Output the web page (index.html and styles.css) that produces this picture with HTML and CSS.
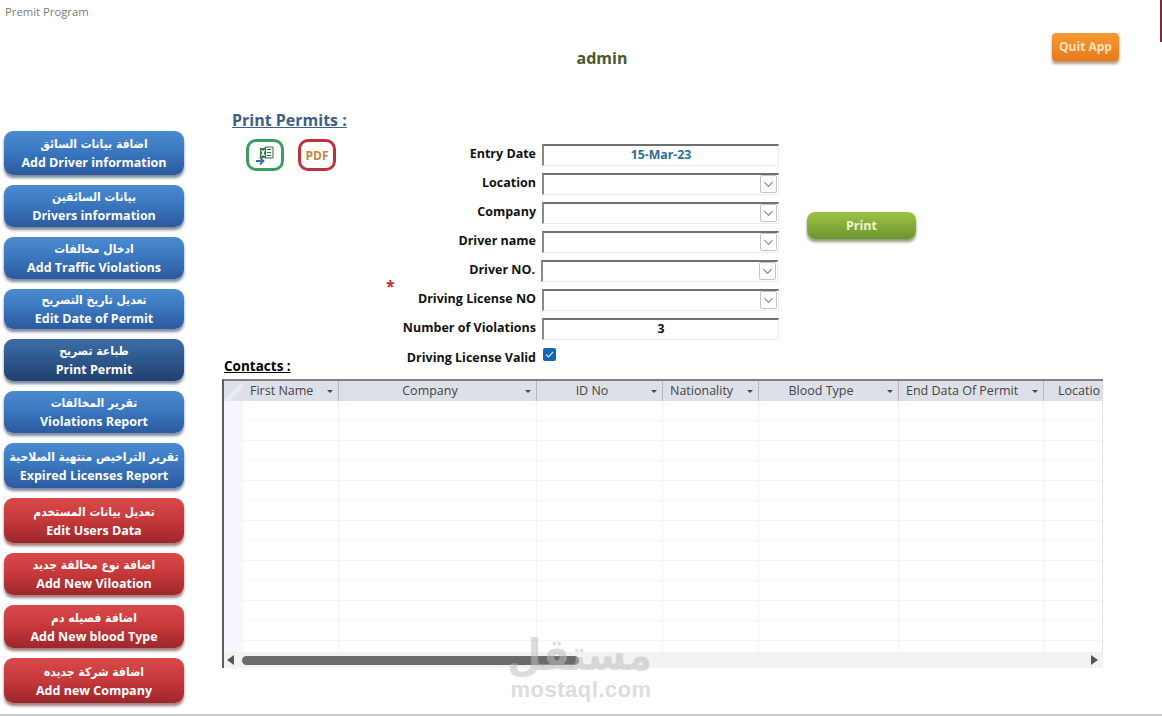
FILE: index.html
```html
<!DOCTYPE html>
<html lang="en">
<head>
    <meta charset="UTF-8">
    <meta name="viewport" content="width=device-width, initial-scale=1.0">
    <title>Premit Program</title>
    <link rel="stylesheet" href="styles.css">
</head>
<body>

<div class="window">
    <div class="titlebar">Premit Program</div>

    <div class="header">
        <div class="user">admin</div>
        <button class="quit">Quit App</button>
    </div>

    <div class="content">
        <div class="sidebar">
            <button class="nav blue"><span lang="ar" dir="rtl">اضافة بيانات السائق</span><b>Add Driver information</b></button>
            <button class="nav blue"><span lang="ar" dir="rtl">بيانات السائقين</span><b>Drivers information</b></button>
            <button class="nav blue"><span lang="ar" dir="rtl">ادخال مخالفات</span><b>Add Traffic Violations</b></button>
            <button class="nav blue"><span lang="ar" dir="rtl">تعديل تاريخ التصريح</span><b>Edit Date of Permit</b></button>
            <button class="nav navy"><span lang="ar" dir="rtl">طباعة تصريح</span><b>Print Permit</b></button>
            <button class="nav blue"><span lang="ar" dir="rtl">تقرير المخالفات</span><b>Violations Report</b></button>
            <button class="nav blue"><span lang="ar" dir="rtl">تقرير التراخيص منتهية الصلاحية</span><b>Expired Licenses Report</b></button>
            <button class="nav red"><span lang="ar" dir="rtl">تعديل بيانات المستخدم</span><b>Edit Users Data</b></button>
            <button class="nav red"><span lang="ar" dir="rtl">اضافة نوع مخالفة جديد</span><b>Add New Viloation</b></button>
            <button class="nav red"><span lang="ar" dir="rtl">اضافة فصيله دم</span><b>Add New blood Type</b></button>
            <button class="nav red"><span lang="ar" dir="rtl">اضافة شركة جديده</span><b>Add new Company</b></button>
        </div>

        <div class="main">
            <div class="top">
                <div class="actions">
                    <h2 class="page-title">Print Permits :</h2>
                    <div class="exports">
                        <button class="export excel" aria-label="Export to Excel">
                            <svg width="22" height="20" viewBox="0 0 22 20">
                                <path d="M11 2h8v11h-8z" fill="#fff" stroke="#2f6b43"/>
                                <path d="M13 4.500h4M13 7.500h4M13 10.500h4" stroke="#2f6b43" stroke-width="1"/>
                                <path d="M6 3h6v10H6z" fill="#2f7a4a"/>
                                <path d="M7.500 5l3 6M10.500 5l-3 6" stroke="#fff" stroke-width="1.300" fill="none"/>
                                <path d="M2 16h7M6 12.500L9.500 16 6 19.500" stroke="#3b6fa8" stroke-width="1.800" fill="none"/>
                            </svg>
                        </button>
                        <button class="export pdf">PDF</button>
                    </div>
                </div>

                <div class="form">
                    <label class="row"><span class="label">Entry Date</span><span class="field date">15-Mar-23</span></label>
                    <label class="row"><span class="label">Location</span><span class="field combo"><i class="arrow"></i></span></label>
                    <label class="row"><span class="label">Company</span><span class="field combo"><i class="arrow"></i></span></label>
                    <label class="row"><span class="label">Driver name</span><span class="field combo"><i class="arrow"></i></span></label>
                    <label class="row nudge"><span class="label">Driver NO.</span><span class="field combo"><i class="arrow"></i></span></label>
                    <label class="row"><span class="label required">Driving License NO</span><span class="field combo"><i class="arrow"></i></span></label>
                    <label class="row"><span class="label">Number of Violations</span><span class="field">3</span></label>
                    <label class="row check-row"><span class="label">Driving License Valid</span>
                        <span class="check">
                            <svg width="13" height="13" viewBox="0 0 13 13"><path d="M3 6.500l2.500 2.500L10 4" stroke="#cfe3f7" stroke-width="1.200" fill="none"/></svg>
                        </span>
                    </label>
                </div>

                <button class="print">Print</button>
            </div>

            <div class="contacts-title">Contacts :</div>

            <div class="grid">
                <div class="grid-head">
                    <div class="corner"></div>
                    <div class="col c1 left">First Name<i></i></div>
                    <div class="col c2">Company<i></i></div>
                    <div class="col c3">ID No<i></i></div>
                    <div class="col c4 left">Nationality<i></i></div>
                    <div class="col c5">Blood Type<i></i></div>
                    <div class="col c6 left">End Data Of Permit<i></i></div>
                    <div class="col c7">Locatio</div>
                </div>
                <div class="grid-body"></div>
                <div class="hscroll">
                    <i class="tri left-tri"></i>
                    <div class="track"><div class="thumb"></div></div>
                    <i class="tri right-tri"></i>
                </div>
            </div>
        </div>
    </div>

    <div class="watermark">
        <div class="wm-ar" lang="ar" dir="rtl">مستقل</div>
        <div class="wm-en">mostaql.com</div>
    </div>
</div>

</body>
</html>
```
FILE: styles.css
```css
* {
    box-sizing: border-box;
}

html, body {
    margin: 0;
    height: 100%;
    overflow: hidden;
}

body {
    background: #fff;
    font-family: "Open Sans", "DejaVu Sans", sans-serif;
    color: #111;
}

button {
    font-family: inherit;
    border: 0;
    padding: 0;
    cursor: pointer;
}

.window {
    position: relative;
    width: 1162px;
    height: 716px;
    border-bottom: 2px solid #c9c9c9;
    overflow: hidden;
}

/* dark strip in the top right corner */
.window::after {
    content: "";
    position: absolute;
    top: 0;
    right: 0;
    width: 2px;
    height: 42px;
    background: #7d2a3c;
}

.titlebar {
    height: 22px;
    padding: 4px 0 0 5px;
    font-size: 11.300px;
    line-height: 15px;
    color: #7b7b7b;
}

.header {
    height: 76px;
    display: flex;
    align-items: flex-start;
}

.user {
    width: 1052px;
    padding: 25px 0 0 0;
    text-align: center;
    font-size: 16px;
    line-height: 22px;
    font-weight: 700;
    color: #4a5a2a;
    text-indent: 152px;
}

.quit {
    width: 67px;
    height: 28px;
    margin-top: 11px;
    padding-bottom: 2px;
    border-radius: 4px;
    background: linear-gradient(#f59a35, #e57a1c);
    box-shadow: 0 3px 3px rgba(120, 70, 20, 0.55);
    color: #fde3b8;
    font-size: 12px;
    font-weight: 700;
}

.content {
    display: flex;
    align-items: flex-start;
}

.sidebar {
    width: 222px;
    padding: 33px 0 0 4px;
    display: grid;
    grid-template-columns: 180px;
    grid-template-rows: 46px 44px 44px 42px 44px 44px 47px 47px 44px 45px 47px;
    row-gap: 8px;
}

.nav {
    display: flex;
    flex-direction: column;
    align-items: center;
    justify-content: center;
    height: calc(100% - 2px);
    border-radius: 9px;
    color: #fff;
    white-space: nowrap;
    box-shadow: 0 3px 3px rgba(40, 60, 90, 0.6);
}

.nav span {
    font-family: "DejaVu Sans Condensed", "DejaVu Sans", sans-serif;
    font-stretch: condensed;
    font-size: 12px;
    line-height: 19px;
    font-weight: 700;
}

.nav b {
    font-size: 12.500px;
    line-height: 17px;
    font-weight: 700;
}

.blue {
    background: linear-gradient(#4a8bd0 0%, #3b78c0 45%, #2c5a9e 100%);
}

.navy {
    background: linear-gradient(#3d6da6 0%, #2f5a8f 45%, #20406f 100%);
}

.red {
    background: linear-gradient(#d84a4a 0%, #c93a3c 45%, #9f262b 100%);
    box-shadow: 0 3px 3px rgba(90, 40, 40, 0.6);
}

.main {
    width: 940px;
    padding-top: 12px;
}

.top {
    display: flex;
    align-items: flex-start;
    height: 247px;
}

.actions {
    width: 134px;
    padding-left: 10px;
}

.page-title {
    margin: 0;
    font-size: 16px;
    line-height: 21px;
    font-weight: 700;
    color: #3d6088;
    text-decoration: underline;
}

.exports {
    display: flex;
    gap: 14px;
    margin: 8px 0 0 14px;
}

.export {
    width: 38px;
    height: 32px;
    display: flex;
    align-items: center;
    justify-content: center;
    background: #fff;
    border-radius: 10px;
    font-size: 12px;
    font-weight: 700;
}

.excel {
    border: 3px solid #3a9e5e;
}

.pdf {
    border: 3px solid #bb333b;
    color: #c4873f;
}

.form {
    width: 423px;
    padding-top: 30px;
    margin-right: 28px;
}

.row {
    display: flex;
    align-items: center;
    justify-content: flex-end;
    height: 29px;
}

.nudge {
    padding-right: 1px;
}

.label {
    position: relative;
    margin: 0 6px 2px 0;
    font-size: 12.500px;
    font-weight: 700;
    color: #111;
}

.required::before {
    content: "*";
    position: absolute;
    left: -32px;
    top: -15px;
    font-size: 16px;
    color: #c8282f;
}

.field {
    position: relative;
    display: block;
    width: 237px;
    height: 22px;
    border-top: 2px solid #707070;
    border-left: 2px solid #8a8a8a;
    border-right: 1px solid #ececec;
    border-bottom: 1px solid #ececec;
    background: #fff;
    text-align: center;
    font-size: 12.300px;
    line-height: 18px;
    font-weight: 700;
}

.date {
    color: #2c6f96;
}

.arrow {
    position: absolute;
    top: 0;
    right: 1px;
    width: 17px;
    height: 18px;
    border: 1px solid #c4c4c4;
    border-radius: 2px;
    background: #fff;
}

.arrow::after {
    content: "";
    position: absolute;
    left: 4px;
    top: 3px;
    width: 6px;
    height: 6px;
    border-right: 1px solid #777;
    border-bottom: 1px solid #777;
    transform: rotate(45deg) scale(0.9);
}

.check-row {
    justify-content: flex-start;
    height: 26px;
    align-items: flex-end;
}

.check-row .label {
    width: 180px;
    margin: 0 7px 3px 0;
    text-align: right;
    flex: none;
}

.check {
    display: block;
    width: 13px;
    height: 13px;
    margin-bottom: 8px;
    background: #1565b0;
    border-radius: 2px;
}

.check svg {
    display: block;
}

.print {
    width: 109px;
    height: 27px;
    margin-top: 102px;
    border-radius: 8px;
    background: linear-gradient(#9cc244, #86ad3a 50%, #6d9430);
    box-shadow: 0 3px 3px rgba(70, 90, 40, 0.6);
    color: #eef6d8;
    font-size: 12.500px;
    font-weight: 700;
}

.contacts-title {
    margin-left: 2px;
    font-size: 13.500px;
    line-height: 18px;
    font-weight: 700;
    color: #000;
    text-decoration: underline;
}

.grid {
    width: 881px;
    height: 289px;
    margin-top: 4px;
    border-top: 2px solid #808080;
    border-left: 2px solid #5e5e5e;
    position: relative;
    overflow: hidden;
}

.grid-head {
    display: flex;
    height: 20px;
    background: #dde1e7;
}

.corner {
    width: 19px;
    background: linear-gradient(135deg, #dde1e7 50%, #eef0f3 50%, #dde1e7 70%);
}

.col {
    position: relative;
    flex: none;
    text-align: center;
    border-right: 1px solid #b4b9c0;
    font-size: 12.500px;
    line-height: 20px;
    color: #444;
    white-space: nowrap;
    padding-right: 15px;
}

.col.left {
    text-align: left;
    padding-left: 7px;
}

.col i {
    position: absolute;
    right: 5px;
    top: 9px;
    border-left: 3px solid transparent;
    border-right: 3px solid transparent;
    border-top: 3px solid #444;
}

.c1 { width: 96px; }
.c2 { width: 198px; }
.c3 { width: 126px; }
.c4 { width: 96px; }
.c5 { width: 140px; }
.c6 { width: 145px; }
.c7 { width: 59px; border-right: 0; padding: 0 0 0 14px; text-align: left; overflow: hidden; }

.grid-body {
    height: 251px;
    border-right: 1px solid #e6e6e6;
    /* row and column lines of the empty datasheet */
    background:
        linear-gradient(#f5f6ff, #f5f6ff) 0 0 / 19px 100% no-repeat,
        linear-gradient(#f2f3f3, #f2f3f3) 114px 0 / 1px 100% no-repeat,
        linear-gradient(#f2f3f3, #f2f3f3) 312px 0 / 1px 100% no-repeat,
        linear-gradient(#f2f3f3, #f2f3f3) 438px 0 / 1px 100% no-repeat,
        linear-gradient(#f2f3f3, #f2f3f3) 534px 0 / 1px 100% no-repeat,
        linear-gradient(#f2f3f3, #f2f3f3) 674px 0 / 1px 100% no-repeat,
        linear-gradient(#f2f3f3, #f2f3f3) 819px 0 / 1px 100% no-repeat,
        repeating-linear-gradient(#fff 0, #fff 19px, #f3f4f4 19px, #f3f4f4 20px);
}

.hscroll {
    display: flex;
    align-items: center;
    height: 16px;
    background: #f2f2f2;
    padding: 0 5px 0 3px;
}

.track {
    flex: 1;
    padding: 0 8px 0 8px;
}

.thumb {
    width: 337px;
    height: 9px;
    border-radius: 5px;
    background: #6b6b6b;
}

.tri {
    border-top: 5px solid transparent;
    border-bottom: 5px solid transparent;
}

.left-tri {
    border-right: 7px solid #555;
}

.right-tri {
    border-left: 7px solid #555;
}

.watermark {
    position: absolute;
    left: 510px;
    top: 629px;
    width: 142px;
    text-align: center;
    color: rgba(190, 190, 190, 0.55);
    font-family: "Liberation Sans", "DejaVu Sans", sans-serif;
    font-weight: 700;
    pointer-events: none;
}

.wm-ar {
    font-size: 44px;
    line-height: 51px;
    font-family: "DejaVu Sans Condensed", "DejaVu Sans", sans-serif;
    font-stretch: condensed;
}

.wm-en {
    font-size: 22px;
    line-height: 20px;
    letter-spacing: 0.500px;
    white-space: nowrap;
}
```
